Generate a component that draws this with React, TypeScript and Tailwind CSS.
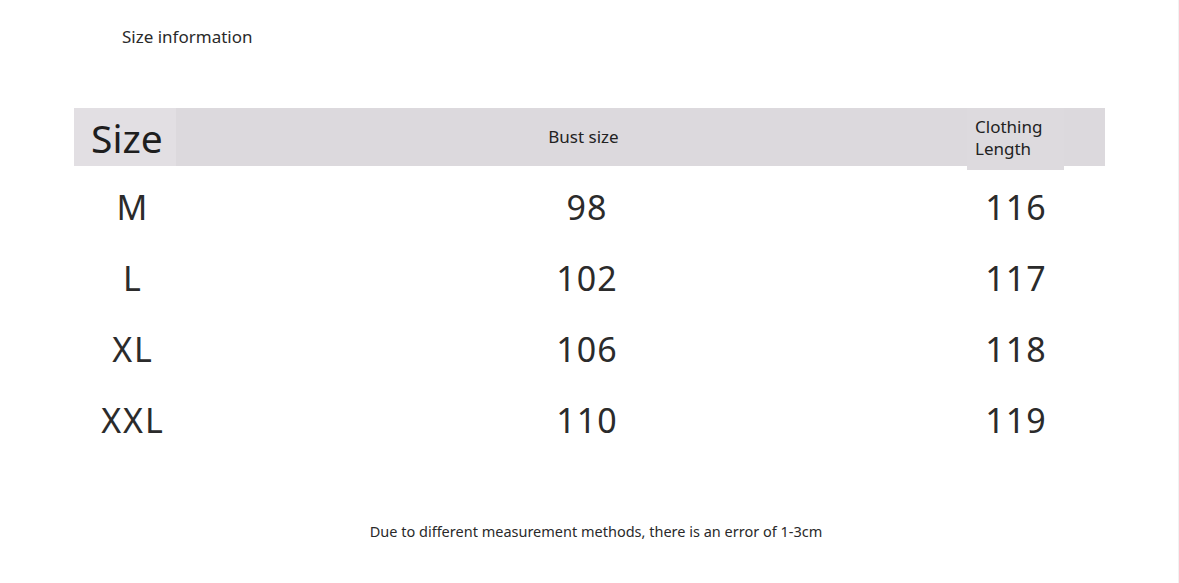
export default function App() {
  const rows = [
    ["M", "98", "116"],
    ["L", "102", "117"],
    ["XL", "106", "118"],
    ["XXL", "110", "119"],
  ];

  return (
    <div
      className="w-[1179px] h-[583px] bg-white text-[#222] overflow-hidden flex flex-col border-r border-[#f1f1f1]"
      style={{ fontFamily: '"Noto Sans", "Open Sans", sans-serif' }}
    >
      {/* Title */}
      <div className="pt-[25px] pl-[122px] text-[17px] leading-[23px] text-[#2a2a2a]">
        Size information
      </div>

      {/* Header bar */}
      <div className="mt-[60px] ml-[74px] w-[1031px] h-[58px] bg-[#dcd9dd] flex items-start">
        <div className="w-[102px] h-[58px] bg-[#e2dfe3] flex items-center pl-[17px] text-[39px] leading-none text-[#1e1e1e]">
          Size
        </div>
        <div className="w-[791px] h-[58px] flex items-center justify-center pl-[24px] text-[17px] text-[#222]">
          Bust size
        </div>
        <div className="w-[97px] h-[62px] bg-[#dddade] pl-[8px] pt-[8px] text-[17px] leading-[22px] text-[#222]">
          Clothing
          <br />
          Length
        </div>
      </div>

      {/* Rows */}
      <div className="mt-[5px] ml-[74px] flex flex-col">
        {rows.map(([s, b, l]) => (
          <div key={s} className="h-[71px] flex items-center text-[34px] leading-none text-[#2b2b2b]">
            <div className="w-[118px] text-center tracking-[2px]">{s}</div>
            <div className="w-[790px] text-center tracking-[1px]">{b}</div>
            <div className="w-[68px] flex justify-center">
              <span className="tracking-[1px] whitespace-nowrap">{l}</span>
            </div>
          </div>
        ))}
      </div>

      {/* Footer note */}
      <div className="mt-[66px] w-full pl-[14px] text-center text-[14.5px] leading-[20px] text-[#2a2a2a]">
        Due to different measurement methods, there is an error of 1-3cm
      </div>
    </div>
  );
}
